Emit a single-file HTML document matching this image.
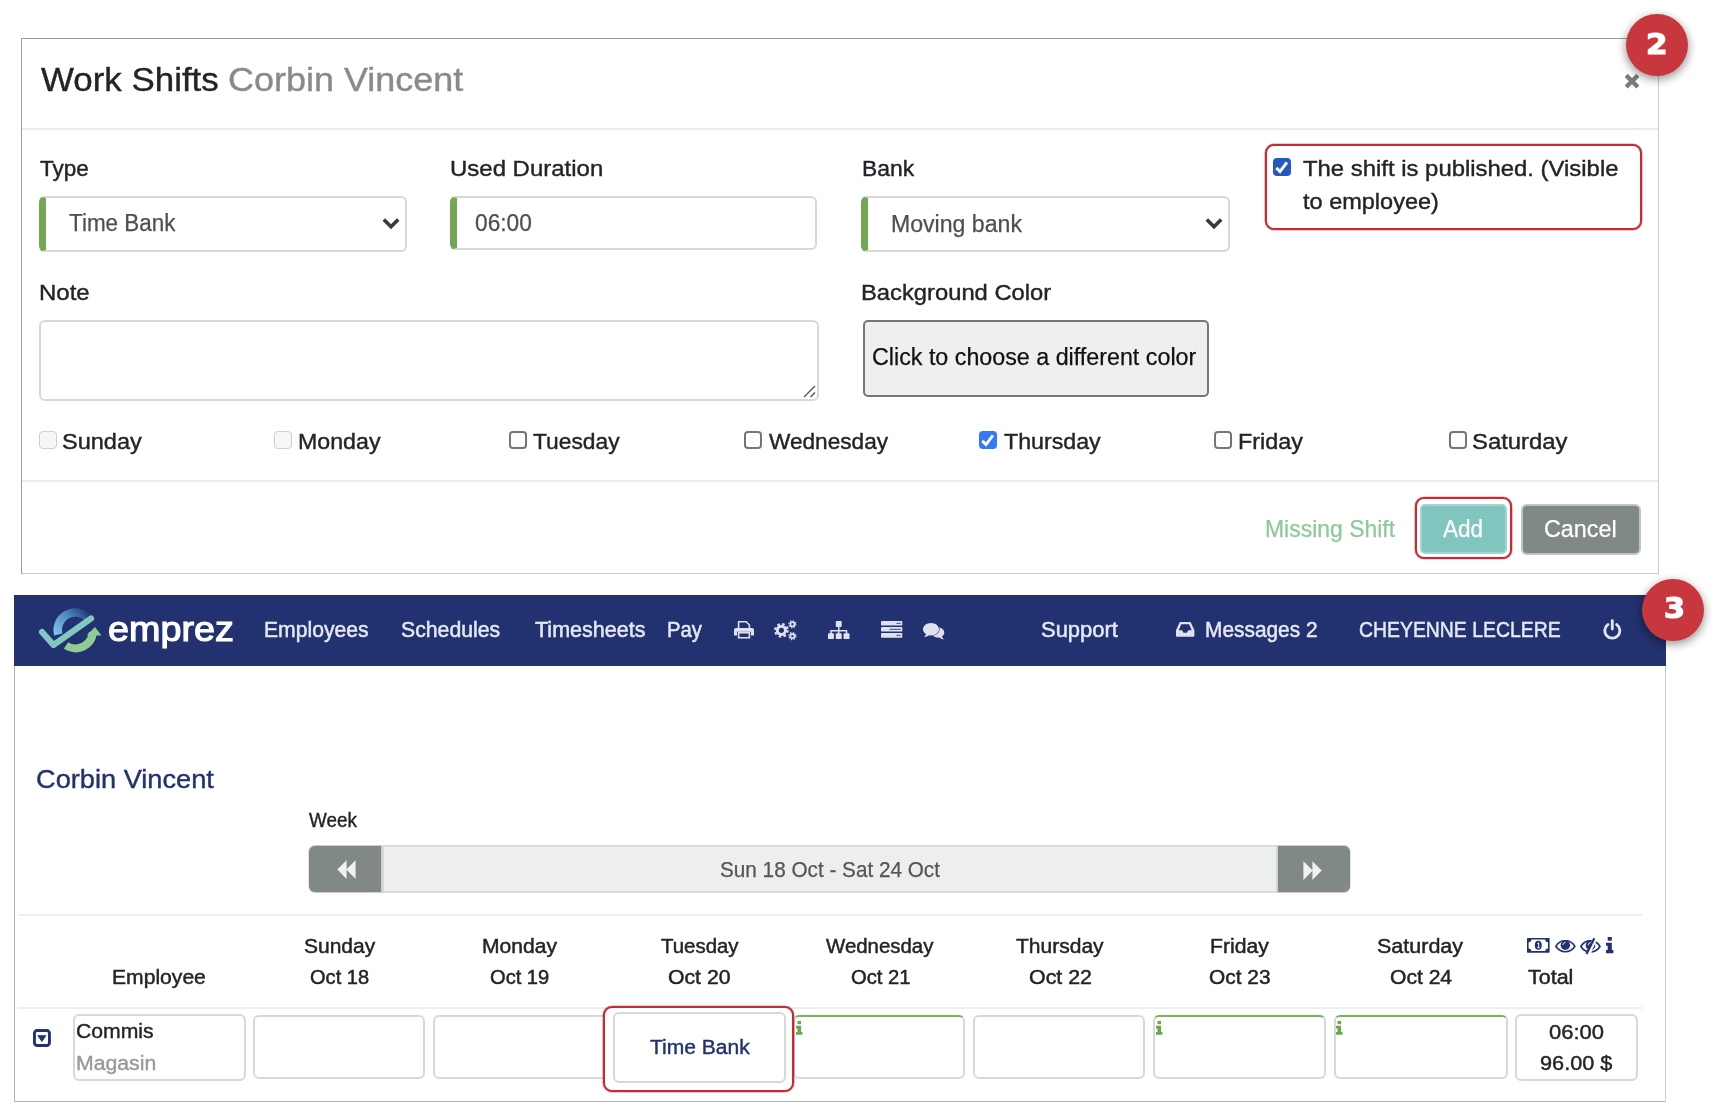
<!DOCTYPE html>
<html lang="en"><head><meta charset="utf-8"><title>Work Shifts</title>
<style>
*{box-sizing:border-box}
html,body{margin:0;padding:0}
body{width:1712px;height:1120px;background:#fff;position:relative;overflow:hidden;font-family:"Liberation Sans",sans-serif}
.a,.t,svg{position:absolute}
.t{white-space:nowrap;display:block}
.fc{background:#fff;border:2px solid #d8d8d8;border-radius:6px}
.g{border-left:7px solid #74a753}
.cb{width:18px;height:18px;border-radius:4px;border:2px solid #767676;background:#fff}
.cb.d{border-color:#cfcfcf;background:#f7f7f7;border-width:1.5px}
.cb.c{border:none;background:#3478f6}
.cell{background:#fff;border:2px solid #d8d8d8;border-radius:6px}
.cell.gt{border-top-color:#79b45b}
.red{border:2px solid #c62b35;border-radius:9px;background:#fff;box-shadow:0 0 0 .6px rgba(198,43,53,.5)}
.badge{width:62px;height:62px;border-radius:50%;background:#c8363e;box-shadow:0 3px 9px 1px rgba(0,0,0,.38)}
</style></head><body>

<!-- ===== modal ===== -->
<div class="a" style="left:21px;top:38px;width:1638px;height:536px;border:1px solid #9a9a9a;border-right-color:#cbcbcb;border-bottom-color:#cbcbcb;background:#fff"></div>
<div class="a" style="left:22px;top:128px;width:1636px;height:2px;background:#e9ecef"></div>
<div class="a" style="left:22px;top:480px;width:1636px;height:2px;background:#e9ecef"></div>

<div class="a fc g" style="left:39px;top:196px;width:368px;height:56px"></div>
<div class="a fc g" style="left:450px;top:196px;width:367px;height:54px"></div>
<div class="a fc g" style="left:861px;top:196px;width:369px;height:56px"></div>
<svg style="left:382px;top:217px" width="18" height="14" viewBox="0 0 18 14"><path d="M1.8 2.6 9 9.8 16.2 2.6" fill="none" stroke="#343a40" stroke-width="3.6"/></svg>
<svg style="left:1205px;top:217px" width="18" height="14" viewBox="0 0 18 14"><path d="M1.8 2.6 9 9.8 16.2 2.6" fill="none" stroke="#343a40" stroke-width="3.6"/></svg>

<div class="a red" style="left:1265px;top:144px;width:377px;height:86px"></div>
<div class="a cb c" style="left:1273.2px;top:158px;background:#2559c0"></div>
<svg style="left:1273.2px;top:158.2px" width="18" height="18" viewBox="0 0 18 18"><path d="M3.3 9.9 7 13.5 13.9 4.3" fill="none" stroke="#fff" stroke-width="2.9"/></svg>

<div class="a fc" style="left:39px;top:320px;width:780px;height:81px"></div>
<svg style="left:801px;top:383px" width="16" height="16" viewBox="0 0 16 16"><path d="M3 14 14 3M9.5 14 14 9.5" stroke="#555" stroke-width="1.4" fill="none"/></svg>
<div class="a" style="left:862.500px;top:320px;width:346px;height:77px;border:2px solid #767676;border-radius:5px;background:#efefef"></div>

<div class="a cb d" style="left:39px;top:431px"></div>
<div class="a cb d" style="left:274px;top:431px"></div>
<div class="a cb" style="left:509px;top:431px"></div>
<div class="a cb" style="left:744px;top:431px"></div>
<div class="a cb c" style="left:978.5px;top:431px"></div>
<svg style="left:978.5px;top:431px" width="18" height="18" viewBox="0 0 18 18"><path d="M3.3 9.9 7 13.5 13.9 4.3" fill="none" stroke="#fff" stroke-width="2.9"/></svg>
<div class="a cb" style="left:1214px;top:431px"></div>
<div class="a cb" style="left:1449px;top:431px"></div>

<div class="a red" style="left:1415px;top:497px;width:97px;height:62px"></div>
<div class="a" style="left:1420px;top:504px;width:87px;height:50px;background:#80c5be;border:2px solid #a3d6d0;border-radius:5px"></div>
<div class="a" style="left:1521px;top:504px;width:120px;height:51px;background:#808888;border:2px solid #c0c4c4;border-radius:6px"></div>

<svg style="left:1623px;top:72px" width="18" height="18" viewBox="0 0 18 18"><path d="M3.2 3.4 14.8 15M14.8 3.4 3.2 15" stroke="#7b7b7b" stroke-width="4.4" fill="none"/></svg>
<div class="a badge" style="left:1625.7px;top:14.4px"></div>

<!-- ===== page panel ===== -->
<div class="a" style="left:14px;top:600px;width:1652px;height:502px;border:1px solid #b4b4b4;border-right-color:#cdcdcd;background:#fff"></div>
<div class="a" style="left:14px;top:595px;width:1652px;height:71px;background:#22316f"></div>
<div class="a badge" style="left:1641.6px;top:578.6px"></div>

<!-- logo -->
<svg style="left:34px;top:602px" width="74" height="56" viewBox="34 602 74 56">
<defs>
<linearGradient id="lb" x1="57" y1="640" x2="88" y2="610" gradientUnits="userSpaceOnUse"><stop offset="0" stop-color="#86cdee"/><stop offset=".6" stop-color="#4a86bd"/><stop offset="1" stop-color="#22316f"/></linearGradient>
</defs>
<path d="M58.3 634.5A17.5 17.5 0 0 1 87.5 617.5" fill="none" stroke="url(#lb)" stroke-width="8.5"/>
<path d="M66 645.5A17.5 17.5 0 0 0 92.9 632.5" fill="none" stroke="#8fcb95" stroke-width="8"/>
<path d="M86.5 635.5 95 627 101.500 635.5Z" fill="#8fcb95"/>
<path d="M42 632 53.500 645 91 618.500" fill="none" stroke="#80c8c0" stroke-width="6.2" stroke-linecap="round" stroke-linejoin="round"/>
</svg>

<!-- nav icons -->


<!-- week bar -->
<div class="a" style="left:309px;top:845px;width:1041px;height:48px;background:#edeef0;border:2px solid #dcdcdc;border-radius:6px"></div>
<div class="a" style="left:381px;top:846px;width:2.5px;height:46px;background:#d8d8d8"></div>
<div class="a" style="left:1275.5px;top:846px;width:2.5px;height:46px;background:#d8d8d8"></div>
<div class="a" style="left:309px;top:845.5px;width:72px;height:46.5px;background:#808888;border-radius:6px 0 0 6px;box-shadow:0 0 0 1px rgba(190,190,190,.45)"></div>
<div class="a" style="left:1278px;top:845.5px;width:72px;height:46.5px;background:#808888;border-radius:0 6px 6px 0;box-shadow:0 0 0 1px rgba(190,190,190,.45)"></div>
<svg style="left:336.6px;top:860.3px" width="19" height="19" viewBox="0 0 19 19"><path d="M9.6 .2v18.7L.3 9.55ZM18.6 .2v18.7L9.3 9.55Z" fill="#f0f2f2"/></svg>
<svg style="left:1303.4px;top:860.5px" width="19" height="19" viewBox="0 0 19 19"><path d="M.4 .2v18.7L9.7 9.55ZM9.400 .2v18.7L18.700 9.550Z" fill="#f0f2f2"/></svg>

<!-- table lines -->
<div class="a" style="left:18px;top:914px;width:1624px;height:2px;background:#eceef0"></div>
<div class="a" style="left:18px;top:1007px;width:1624px;height:2px;background:#eceef0"></div>

<!-- cells -->
<div class="a cell" style="left:73px;top:1014px;width:172.500px;height:67px"></div>
<div class="a cell" style="left:253.400px;top:1015px;width:172px;height:64px"></div>
<div class="a cell" style="left:433.400px;top:1015px;width:179px;height:64px"></div>
<div class="a cell gt" style="left:793.400px;top:1015px;width:172px;height:64px"></div>
<div class="a cell" style="left:973.400px;top:1015px;width:172px;height:64px"></div>
<div class="a cell gt" style="left:1153.400px;top:1015px;width:173px;height:64px"></div>
<div class="a cell gt" style="left:1333.700px;top:1015px;width:174.300px;height:64px"></div>
<div class="a cell" style="left:1515.300px;top:1013.500px;width:122.500px;height:67px"></div>
<div class="a red" style="left:603px;top:1006px;width:191px;height:85.500px"></div>
<div class="a cell" style="left:613.400px;top:1012px;width:172.500px;height:70.500px"></div>

<!-- print -->
<svg style="left:733.700px;top:621.100px" width="20" height="18" viewBox="0 0 20 18"><g fill="#dfe2ee"><path d="M2 7h16a2 2 0 0 1 2 2v5a.6.6 0 0 1-.6.600H17v-3.800H3v3.800H.6a.6.6 0 0 1-.6-.6V9a2 2 0 0 1 2-2z"/></g><g fill="none" stroke="#dfe2ee" stroke-width="1.600"><path d="M4.600 7.500V.800h7.600l3.200 3.200v3.500"/><path d="M4.600 11.600h10.800v5.100H4.600z"/></g></svg>
<!-- cogs -->
<svg style="left:774px;top:619.700px" width="23" height="21" viewBox="0 0 23 21"><g fill="none" stroke="#dfe2ee"><circle cx="7.400" cy="10.300" r="4.100" stroke-width="3"/><circle cx="7.400" cy="10.300" r="6.300" stroke-width="2.200" stroke-dasharray="2.500 2.450"/><circle cx="18.400" cy="4.300" r="2.100" stroke-width="1.800"/><circle cx="18.400" cy="4.300" r="3.500" stroke-width="1.300" stroke-dasharray="1.350 1.400"/><circle cx="18.400" cy="16.100" r="2.100" stroke-width="1.800"/><circle cx="18.400" cy="16.100" r="3.500" stroke-width="1.300" stroke-dasharray="1.350 1.400"/></g></svg>
<!-- sitemap -->
<svg style="left:828.200px;top:620.800px" width="22" height="19" viewBox="0 0 22 19"><g fill="#dfe2ee"><rect x="7.800" y="0" width="5.900" height="5.900" rx=".9"/><rect x="0" y="12.200" width="5.900" height="5.900" rx=".9"/><rect x="7.800" y="12.200" width="5.900" height="5.900" rx=".9"/><rect x="15.600" y="12.200" width="5.900" height="5.900" rx=".9"/></g><path d="M10.750 5v8M2.950 13V9.700h15.600V13" fill="none" stroke="#dfe2ee" stroke-width="1.500"/></svg>
<!-- server -->
<svg style="left:880.900px;top:620.800px" width="22" height="17" viewBox="0 0 22 17"><g fill="#dfe2ee"><rect x="0" y="0" width="21.300" height="4.600" rx=".8"/><rect x="0" y="6" width="21.300" height="4.600" rx=".8"/><rect x="0" y="12.100" width="21.300" height="4.600" rx=".8"/></g><path d="M15.500 2.300h4.200M8.500 8.300h11.200M15.500 14.400h4.200" stroke="#5a6596" stroke-width="1.300"/></svg>
<!-- comments -->
<svg style="left:922.600px;top:622.500px" width="22" height="17" viewBox="0 0 22 17"><path d="M14.800 4.600c3.700 0 6.500 2.300 6.500 5 0 1.500-.9 2.900-2.300 3.800.3 1.100 1 2 1.900 2.900-1.700-.1-3.300-.8-4.500-1.900-.5.100-1 .2-1.600.2-3.700 0-6.500-2.300-6.500-5s2.800-5 6.500-5z" fill="#dfe2ee"/><path d="M8 0c4.4 0 8 2.8 8 6.2s-3.6 6.2-8 6.2c-.7 0-1.4-.1-2.1-.2-1.3 1.1-2.9 1.8-4.7 1.9.9-.9 1.6-1.900 1.9-3C1.200 10 0 8.200 0 6.200 0 2.800 3.600 0 8 0z" fill="#dfe2ee" stroke="#22316f" stroke-width="1.300" paint-order="stroke"/></svg>
<!-- inbox -->
<svg style="left:1175.800px;top:621.8px" width="19" height="15" viewBox="0 0 19 15"><path fill-rule="evenodd" fill="#dfe2ee" d="M3.800 0h10.800l3.800 8.300v5.400a1 1 0 0 1-1 1H1a1 1 0 0 1-1-1V8.300zM5.300 2.200 2.700 8.300h3.500l1.200 2.400h3.600l1.200-2.400h3.500L13.100 2.200z"/></svg>
<!-- power -->
<svg style="left:1602.6px;top:618.8px" width="19" height="21" viewBox="0 0 19 21"><g fill="none" stroke="#dfe2ee" stroke-width="2.9" stroke-linecap="round"><path d="M4.9 5.600a7.500 7.500 0 1 0 8.800 0"/><path d="M9.300 1.800v8.200"/></g></svg>
<!-- money -->
<svg style="left:1527.200px;top:938.300px" width="23" height="15" viewBox="0 0 23 15"><rect width="22.600" height="14.700" rx=".8" fill="#22316f"/><path d="M4.300 1.600h14a2.700 2.700 0 0 0 2.700 2.700v6.100a2.700 2.700 0 0 0-2.700 2.700h-14a2.700 2.700 0 0 0-2.700-2.700V4.300a2.700 2.700 0 0 0 2.700-2.700z" fill="#fff"/><ellipse cx="11.300" cy="7.350" rx="3.500" ry="4.500" fill="#22316f"/><path d="M10.400 5.600l1.300-.8v4.600M10.300 9.700h2.400" stroke="#fff" stroke-width="1" fill="none"/></svg>
<!-- eye -->
<svg style="left:1554.800px;top:938.9px" width="21" height="14" viewBox="0 0 21 14"><path d="M.8 7.300C3 3.600 6.400 1.700 10.350 1.700S17.700 3.600 19.900 7.300C17.700 10.800 14.300 12.700 10.350 12.700S3 10.800.8 7.300z" fill="#fff" stroke="#22316f" stroke-width="1.600"/><circle cx="10.350" cy="6.200" r="4.700" fill="#22316f"/><path d="M7.900 5.600a2.700 2.700 0 0 1 2.300-2.300" stroke="#fff" stroke-width=".9" fill="none" stroke-linecap="round"/></svg>
<!-- eye-slash -->
<svg style="left:1580.400px;top:938.300px" width="21" height="17" viewBox="0 0 21 17"><path d="M.8 8.500C3 4.800 6.400 2.900 10.400 2.900S17.800 4.800 20 8.500C17.800 12 14.400 13.900 10.400 13.900S3 12 .8 8.500z" fill="#fff" stroke="#22316f" stroke-width="1.600"/><circle cx="10.400" cy="7.400" r="4.700" fill="#22316f"/><path d="M8 6.800a2.700 2.700 0 0 1 2.300-2.300" stroke="#fff" stroke-width=".9" fill="none" stroke-linecap="round"/><path d="M15.200 0 8.400 16.300" stroke="#fff" stroke-width="4.200"/><path d="M14.300.300 6.500 15.900" stroke="#22316f" stroke-width="2.200"/><path d="M12.400 11.300c1.500-.8 2.300-2.300 2.600-3.600" stroke="#22316f" stroke-width="1" fill="none"/></svg>
<!-- info -->
<svg style="left:1605.8px;top:937px" width="8" height="17" viewBox="0 0 8 17"><path d="M1.700 0h4.100v3.700H1.700zM0 5.700h5.800v7.400h1.600V16.200H0v-3.100h1.700V8.800H0z" fill="#22316f"/></svg>
<!-- green info -->
<svg style="left:796.2px;top:1021px" width="7" height="13.7" preserveAspectRatio="none" viewBox="0 0 8 16.2"><path d="M1.700 0h4.100v3.700H1.700zM0 5.700h5.800v7.400h1.600V16.200H0v-3.100h1.700V8.800H0z" fill="#6aa84f"/></svg>
<svg style="left:1156.1px;top:1021px" width="7" height="13.7" preserveAspectRatio="none" viewBox="0 0 8 16.2"><path d="M1.700 0h4.100v3.700H1.700zM0 5.700h5.800v7.400h1.600V16.200H0v-3.100h1.700V8.800H0z" fill="#6aa84f"/></svg>
<svg style="left:1336.1px;top:1021px" width="7" height="13.7" preserveAspectRatio="none" viewBox="0 0 8 16.2"><path d="M1.700 0h4.100v3.700H1.700zM0 5.700h5.800v7.400h1.600V16.200H0v-3.100h1.700V8.800H0z" fill="#6aa84f"/></svg>
<!-- caret square -->
<svg style="left:33px;top:1029px" width="18" height="18" viewBox="0 0 18 18"><rect x="1.45" y="1.45" width="15" height="15" rx="2.8" fill="#fff" stroke="#22316f" stroke-width="2.9"/><path d="M4.9 6.7h8l-4 5.800z" fill="#22316f" stroke="#22316f" stroke-width=".9" stroke-linejoin="round"/></svg>

<div class="a" style="left:0;top:0;width:1712px;height:1120px;will-change:transform">
<span class="t" style="top:57.8px;font-size:33.6px;line-height:44px;color:#212529;left:40.9px;transform-origin:0 0;transform:scaleX(1.0391);-webkit-text-stroke:0.4px #212529;">Work Shifts</span>
<span class="t" style="top:57.8px;font-size:33.6px;line-height:44px;color:#8a8a8a;left:228.0px;transform-origin:0 0;transform:scaleX(1.0716);-webkit-text-stroke:0.4px #8a8a8a;">Corbin Vincent</span>
<span class="t" style="top:153.7px;font-size:22.4px;line-height:29px;color:#212529;left:40.2px;transform-origin:0 0;transform:scaleX(1.0044);-webkit-text-stroke:0.4px #212529;">Type</span>
<span class="t" style="top:153.7px;font-size:22.4px;line-height:29px;color:#212529;left:449.9px;transform-origin:0 0;transform:scaleX(1.0706);-webkit-text-stroke:0.4px #212529;">Used Duration</span>
<span class="t" style="top:153.7px;font-size:22.4px;line-height:29px;color:#212529;left:861.7px;transform-origin:0 0;transform:scaleX(1.0209);-webkit-text-stroke:0.4px #212529;">Bank</span>
<span class="t" style="top:277.6px;font-size:22.4px;line-height:29px;color:#212529;left:39.1px;transform-origin:0 0;transform:scaleX(1.0710);-webkit-text-stroke:0.4px #212529;">Note</span>
<span class="t" style="top:277.6px;font-size:22.4px;line-height:29px;color:#212529;left:861.1px;transform-origin:0 0;transform:scaleX(1.0612);-webkit-text-stroke:0.4px #212529;">Background Color</span>
<span class="t" style="top:208.2px;font-size:23.37px;line-height:30px;color:#495057;left:69.0px;transform-origin:0 0;transform:scaleX(0.9615);-webkit-text-stroke:.25px #495057;">Time Bank</span>
<span class="t" style="top:207.6px;font-size:23.64px;line-height:31px;color:#495057;left:474.9px;transform-origin:0 0;transform:scaleX(0.9615);-webkit-text-stroke:.25px #495057;">06:00</span>
<span class="t" style="top:207.5px;font-size:24.03px;line-height:31px;color:#495057;left:891.0px;transform-origin:0 0;transform:scaleX(0.9615);-webkit-text-stroke:.25px #495057;">Moving bank</span>
<span class="t" style="top:153.6px;font-size:22.4px;line-height:29px;color:#212529;left:1302.9px;transform-origin:0 0;transform:scaleX(1.0666);-webkit-text-stroke:0.4px #212529;">The shift is published. (Visible</span>
<span class="t" style="top:187.4px;font-size:22.4px;line-height:29px;color:#212529;left:1302.9px;transform-origin:0 0;transform:scaleX(1.0498);-webkit-text-stroke:0.4px #212529;">to employee)</span>
<span class="t" style="top:426.5px;font-size:22.4px;line-height:29px;color:#212529;left:62.0px;transform-origin:0 0;transform:scaleX(1.0496);-webkit-text-stroke:0.4px #212529;">Sunday</span>
<span class="t" style="top:426.5px;font-size:22.4px;line-height:29px;color:#212529;left:297.6px;transform-origin:0 0;transform:scaleX(1.0357);-webkit-text-stroke:0.4px #212529;">Monday</span>
<span class="t" style="top:426.5px;font-size:22.4px;line-height:29px;color:#212529;left:532.9px;transform-origin:0 0;transform:scaleX(1.0180);-webkit-text-stroke:0.4px #212529;">Tuesday</span>
<span class="t" style="top:426.5px;font-size:22.4px;line-height:29px;color:#212529;left:768.6px;transform-origin:0 0;transform:scaleX(1.0106);-webkit-text-stroke:0.4px #212529;">Wednesday</span>
<span class="t" style="top:426.5px;font-size:22.4px;line-height:29px;color:#212529;left:1004.0px;transform-origin:0 0;transform:scaleX(1.0357);-webkit-text-stroke:0.4px #212529;">Thursday</span>
<span class="t" style="top:426.5px;font-size:22.4px;line-height:29px;color:#212529;left:1237.6px;transform-origin:0 0;transform:scaleX(1.0433);-webkit-text-stroke:0.4px #212529;">Friday</span>
<span class="t" style="top:426.5px;font-size:22.4px;line-height:29px;color:#212529;left:1472.0px;transform-origin:0 0;transform:scaleX(1.0657);-webkit-text-stroke:0.4px #212529;">Saturday</span>
<span class="t" style="top:341.1px;font-size:24.21px;line-height:31px;color:#111;left:871.8px;transform-origin:0 0;transform:scaleX(0.9615);-webkit-text-stroke:.25px #111;">Click to choose a different color</span>
<span class="t" style="top:513.4px;font-size:23.87px;line-height:31px;color:#8dc99a;left:1264.5px;transform-origin:0 0;transform:scaleX(0.9615);-webkit-text-stroke:.25px #8dc99a;">Missing Shift</span>
<span class="t" style="top:513.6px;font-size:23.48px;line-height:31px;color:#fff;left:1443.4px;transform-origin:0 0;transform:scaleX(0.9615);-webkit-text-stroke:.25px #fff;">Add</span>
<span class="t" style="top:512.8px;font-size:24.28px;line-height:32px;color:#fff;left:1544.0px;transform-origin:0 0;transform:scaleX(0.9615);-webkit-text-stroke:.25px #fff;">Cancel</span>
<span class="t" style="top:615.8px;font-size:21.7px;line-height:28px;color:#e6e8f1;left:263.7px;transform-origin:0 0;transform:scaleX(0.9743);-webkit-text-stroke:.5px #e6e8f1;">Employees</span>
<span class="t" style="top:615.8px;font-size:21.7px;line-height:28px;color:#e6e8f1;left:401.4px;transform-origin:0 0;transform:scaleX(0.9799);-webkit-text-stroke:.5px #e6e8f1;">Schedules</span>
<span class="t" style="top:615.8px;font-size:21.7px;line-height:28px;color:#e6e8f1;left:534.8px;transform-origin:0 0;transform:scaleX(0.9924);-webkit-text-stroke:.5px #e6e8f1;">Timesheets</span>
<span class="t" style="top:615.8px;font-size:21.7px;line-height:28px;color:#e6e8f1;left:666.7px;transform-origin:0 0;transform:scaleX(0.9336);-webkit-text-stroke:.5px #e6e8f1;">Pay</span>
<span class="t" style="top:615.8px;font-size:21.7px;line-height:28px;color:#e6e8f1;left:1040.6px;transform-origin:0 0;transform:scaleX(1.0127);-webkit-text-stroke:.5px #e6e8f1;">Support</span>
<span class="t" style="top:615.8px;font-size:21.7px;line-height:28px;color:#e6e8f1;left:1205.2px;transform-origin:0 0;transform:scaleX(0.9628);-webkit-text-stroke:.5px #e6e8f1;">Messages 2</span>
<span class="t" style="top:615.8px;font-size:21.7px;line-height:28px;color:#e6e8f1;left:1359.3px;transform-origin:0 0;transform:scaleX(0.8945);-webkit-text-stroke:.5px #e6e8f1;">CHEYENNE LECLERE</span>
<span class="t" style="top:605.6px;font-size:35.2px;line-height:46px;color:#fff;left:108.1px;transform-origin:0 0;transform:scaleX(1.0729);-webkit-text-stroke:1.2px #fff;">emprez</span>
<span class="t" style="top:761.7px;font-size:26.3px;line-height:34px;color:#22316f;left:36.4px;transform-origin:0 0;transform:scaleX(1.0343);-webkit-text-stroke:0.4px #22316f;">Corbin Vincent</span>
<span class="t" style="top:807.1px;font-size:20.3px;line-height:26px;color:#212529;left:308.8px;transform-origin:0 0;transform:scaleX(0.9286);-webkit-text-stroke:0.4px #212529;">Week</span>
<span class="t" style="top:855.6px;font-size:21.55px;line-height:28px;color:#555;left:719.6px;transform-origin:0 0;transform:scaleX(0.9615);-webkit-text-stroke:.25px #555;">Sun 18 Oct - Sat 24 Oct</span>
<span class="t" style="top:933.6px;font-size:19.6px;line-height:25px;color:#212529;left:303.8px;transform-origin:0 0;transform:scaleX(1.0712);-webkit-text-stroke:.45px #212529;">Sunday</span>
<span class="t" style="top:964.6px;font-size:19.6px;line-height:25px;color:#212529;left:309.6px;transform-origin:0 0;transform:scaleX(1.0238);-webkit-text-stroke:.45px #212529;">Oct 18</span>
<span class="t" style="top:933.6px;font-size:19.6px;line-height:25px;color:#212529;left:481.7px;transform-origin:0 0;transform:scaleX(1.0753);-webkit-text-stroke:.45px #212529;">Monday</span>
<span class="t" style="top:964.6px;font-size:19.6px;line-height:25px;color:#212529;left:490.3px;transform-origin:0 0;transform:scaleX(1.0260);-webkit-text-stroke:.45px #212529;">Oct 19</span>
<span class="t" style="top:933.6px;font-size:19.6px;line-height:25px;color:#212529;left:660.8px;transform-origin:0 0;transform:scaleX(1.0425);-webkit-text-stroke:.45px #212529;">Tuesday</span>
<span class="t" style="top:964.6px;font-size:19.6px;line-height:25px;color:#212529;left:668.4px;transform-origin:0 0;transform:scaleX(1.0826);-webkit-text-stroke:.45px #212529;">Oct 20</span>
<span class="t" style="top:933.6px;font-size:19.6px;line-height:25px;color:#212529;left:825.9px;transform-origin:0 0;transform:scaleX(1.0414);-webkit-text-stroke:.45px #212529;">Wednesday</span>
<span class="t" style="top:964.6px;font-size:19.6px;line-height:25px;color:#212529;left:850.5px;transform-origin:0 0;transform:scaleX(1.0330);-webkit-text-stroke:.45px #212529;">Oct 21</span>
<span class="t" style="top:933.6px;font-size:19.6px;line-height:25px;color:#212529;left:1015.9px;transform-origin:0 0;transform:scaleX(1.0723);-webkit-text-stroke:.45px #212529;">Thursday</span>
<span class="t" style="top:964.6px;font-size:19.6px;line-height:25px;color:#212529;left:1028.9px;transform-origin:0 0;transform:scaleX(1.0911);-webkit-text-stroke:.45px #212529;">Oct 22</span>
<span class="t" style="top:933.6px;font-size:19.6px;line-height:25px;color:#212529;left:1210.1px;transform-origin:0 0;transform:scaleX(1.0813);-webkit-text-stroke:.45px #212529;">Friday</span>
<span class="t" style="top:964.6px;font-size:19.6px;line-height:25px;color:#212529;left:1209.4px;transform-origin:0 0;transform:scaleX(1.0653);-webkit-text-stroke:.45px #212529;">Oct 23</span>
<span class="t" style="top:933.6px;font-size:19.6px;line-height:25px;color:#212529;left:1377.4px;transform-origin:0 0;transform:scaleX(1.0976);-webkit-text-stroke:.45px #212529;">Saturday</span>
<span class="t" style="top:964.6px;font-size:19.6px;line-height:25px;color:#212529;left:1389.7px;transform-origin:0 0;transform:scaleX(1.0757);-webkit-text-stroke:.45px #212529;">Oct 24</span>
<span class="t" style="top:964.6px;font-size:19.6px;line-height:25px;color:#212529;left:112.0px;transform-origin:0 0;transform:scaleX(1.0773);-webkit-text-stroke:.45px #212529;">Employee</span>
<span class="t" style="top:964.6px;font-size:19.6px;line-height:25px;color:#212529;left:1528.4px;transform-origin:0 0;transform:scaleX(1.0966);-webkit-text-stroke:.45px #212529;">Total</span>
<span class="t" style="top:1019.3px;font-size:19.6px;line-height:25px;color:#212529;left:75.9px;transform-origin:0 0;transform:scaleX(1.0796);-webkit-text-stroke:0.4px #212529;">Commis</span>
<span class="t" style="top:1050.5px;font-size:19.6px;line-height:25px;color:#999;left:75.9px;transform-origin:0 0;transform:scaleX(1.0837);-webkit-text-stroke:0.4px #999;">Magasin</span>
<span class="t" style="top:1035.2px;font-size:19.6px;line-height:25px;color:#22316f;left:649.9px;transform-origin:0 0;transform:scaleX(1.0739);-webkit-text-stroke:0.4px #22316f;">Time Bank</span>
<span class="t" style="top:1019.5px;font-size:19.6px;line-height:25px;color:#212529;left:1548.8px;transform-origin:0 0;transform:scaleX(1.1234);-webkit-text-stroke:0.4px #212529;">06:00</span>
<span class="t" style="top:1051.0px;font-size:19.6px;line-height:25px;color:#212529;left:1540.4px;transform-origin:0 0;transform:scaleX(1.1073);-webkit-text-stroke:0.4px #212529;">96.00 $</span>
<span class="t" style="top:26.0px;font-size:27.5px;line-height:36px;color:#fff;font-weight:bold;font-family:'DejaVu Sans',sans-serif;left:1646.2px;transform-origin:0 0;transform:scaleX(1.1267);-webkit-text-stroke:1.2px #fff;">2</span>
<span class="t" style="top:589.9px;font-size:27.5px;line-height:36px;color:#fff;font-weight:bold;font-family:'DejaVu Sans',sans-serif;left:1663.5px;transform-origin:0 0;transform:scaleX(1.1000);-webkit-text-stroke:1.2px #fff;">3</span>
</div>
</body></html>
